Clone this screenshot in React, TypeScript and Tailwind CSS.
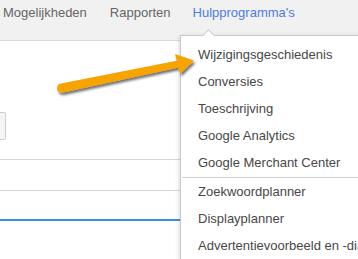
import React from 'react'

const tools = ['Wijzigingsgeschiedenis', 'Conversies', 'Toeschrijving', 'Google Analytics', 'Google Merchant Center']
const planners = ['Zoekwoordplanner', 'Displayplanner', 'Advertentievoorbeeld en -diagnose']

export default function App() {
  return (
    <div className="relative w-[358px] h-[259px] overflow-hidden bg-white font-['Liberation_Sans',Arial,sans-serif] text-[13px]">
      {/* top nav */}
      <div className="h-[41px] bg-[#f1f1f1] border-b border-[#dadada] flex items-start pt-[5px] pl-[3px] leading-4">
        <span className="text-[#666]">Mogelijkheden</span>
        <span className="ml-[23px] text-[#666]">Rapporten</span>
        <span className="ml-[22px] text-[#4d7ce0]">Hulpprogramma's</span>
      </div>

      {/* page content behind the menu */}
      <div className="pt-[71px]">
        <div className="w-[6px] h-[28px] bg-[#f5f5f5] border border-[#cfcfcf] border-l-0 rounded-r-[2px]" />
        <div className="mt-[19px] border-t border-[#d6d6d6]" />
        <div className="mt-[30px] border-t border-[#d6d6d6]" />
        <div className="mt-[28px] h-[2px] bg-[#3d8fdb]" />
      </div>

      {/* dropdown menu */}
      <div className="absolute left-[180px] top-[35px] w-[200px] bg-white border border-[#c9c9c9] shadow-[0_2px_5px_rgba(0,0,0,0.2)] pt-[5px] text-[#474747] whitespace-nowrap">
        <div className="absolute left-[23px] top-[-5px] w-[9px] h-[9px] rotate-45 bg-white border-l border-t border-[#c9c9c9]" />
        {tools.map(t => (
          <div key={t} className="relative h-[27px] leading-[27px] pl-[17px]">{t}</div>
        ))}
        <div className="mt-[1px] ml-[1px] border-t border-[#d0d0d0]" />
        {planners.map(t => (
          <div key={t} className="h-[27px] leading-[27px] pl-[17px]">{t}</div>
        ))}
      </div>

      {/* annotation arrow */}
      <svg className="absolute inset-0 pointer-events-none" width="358" height="259" viewBox="0 0 358 259">
        <defs>
          <filter id="sh" x="-20%" y="-50%" width="140%" height="200%">
            <feDropShadow dx="1.5" dy="2.5" stdDeviation="1.2" floodColor="#000" floodOpacity="0.55" />
          </filter>
        </defs>
        <g filter="url(#sh)" fill="#f7a400">
          <path d="M61 83.5 L178 60.5 L178.5 67.5 L63 92.5 Q57 93 57 88 Q57 84 61 83.5 Z" />
          <path d="M175 54 L194 60.5 L180 74 Z" />
        </g>
      </svg>
    </div>
  )
}
